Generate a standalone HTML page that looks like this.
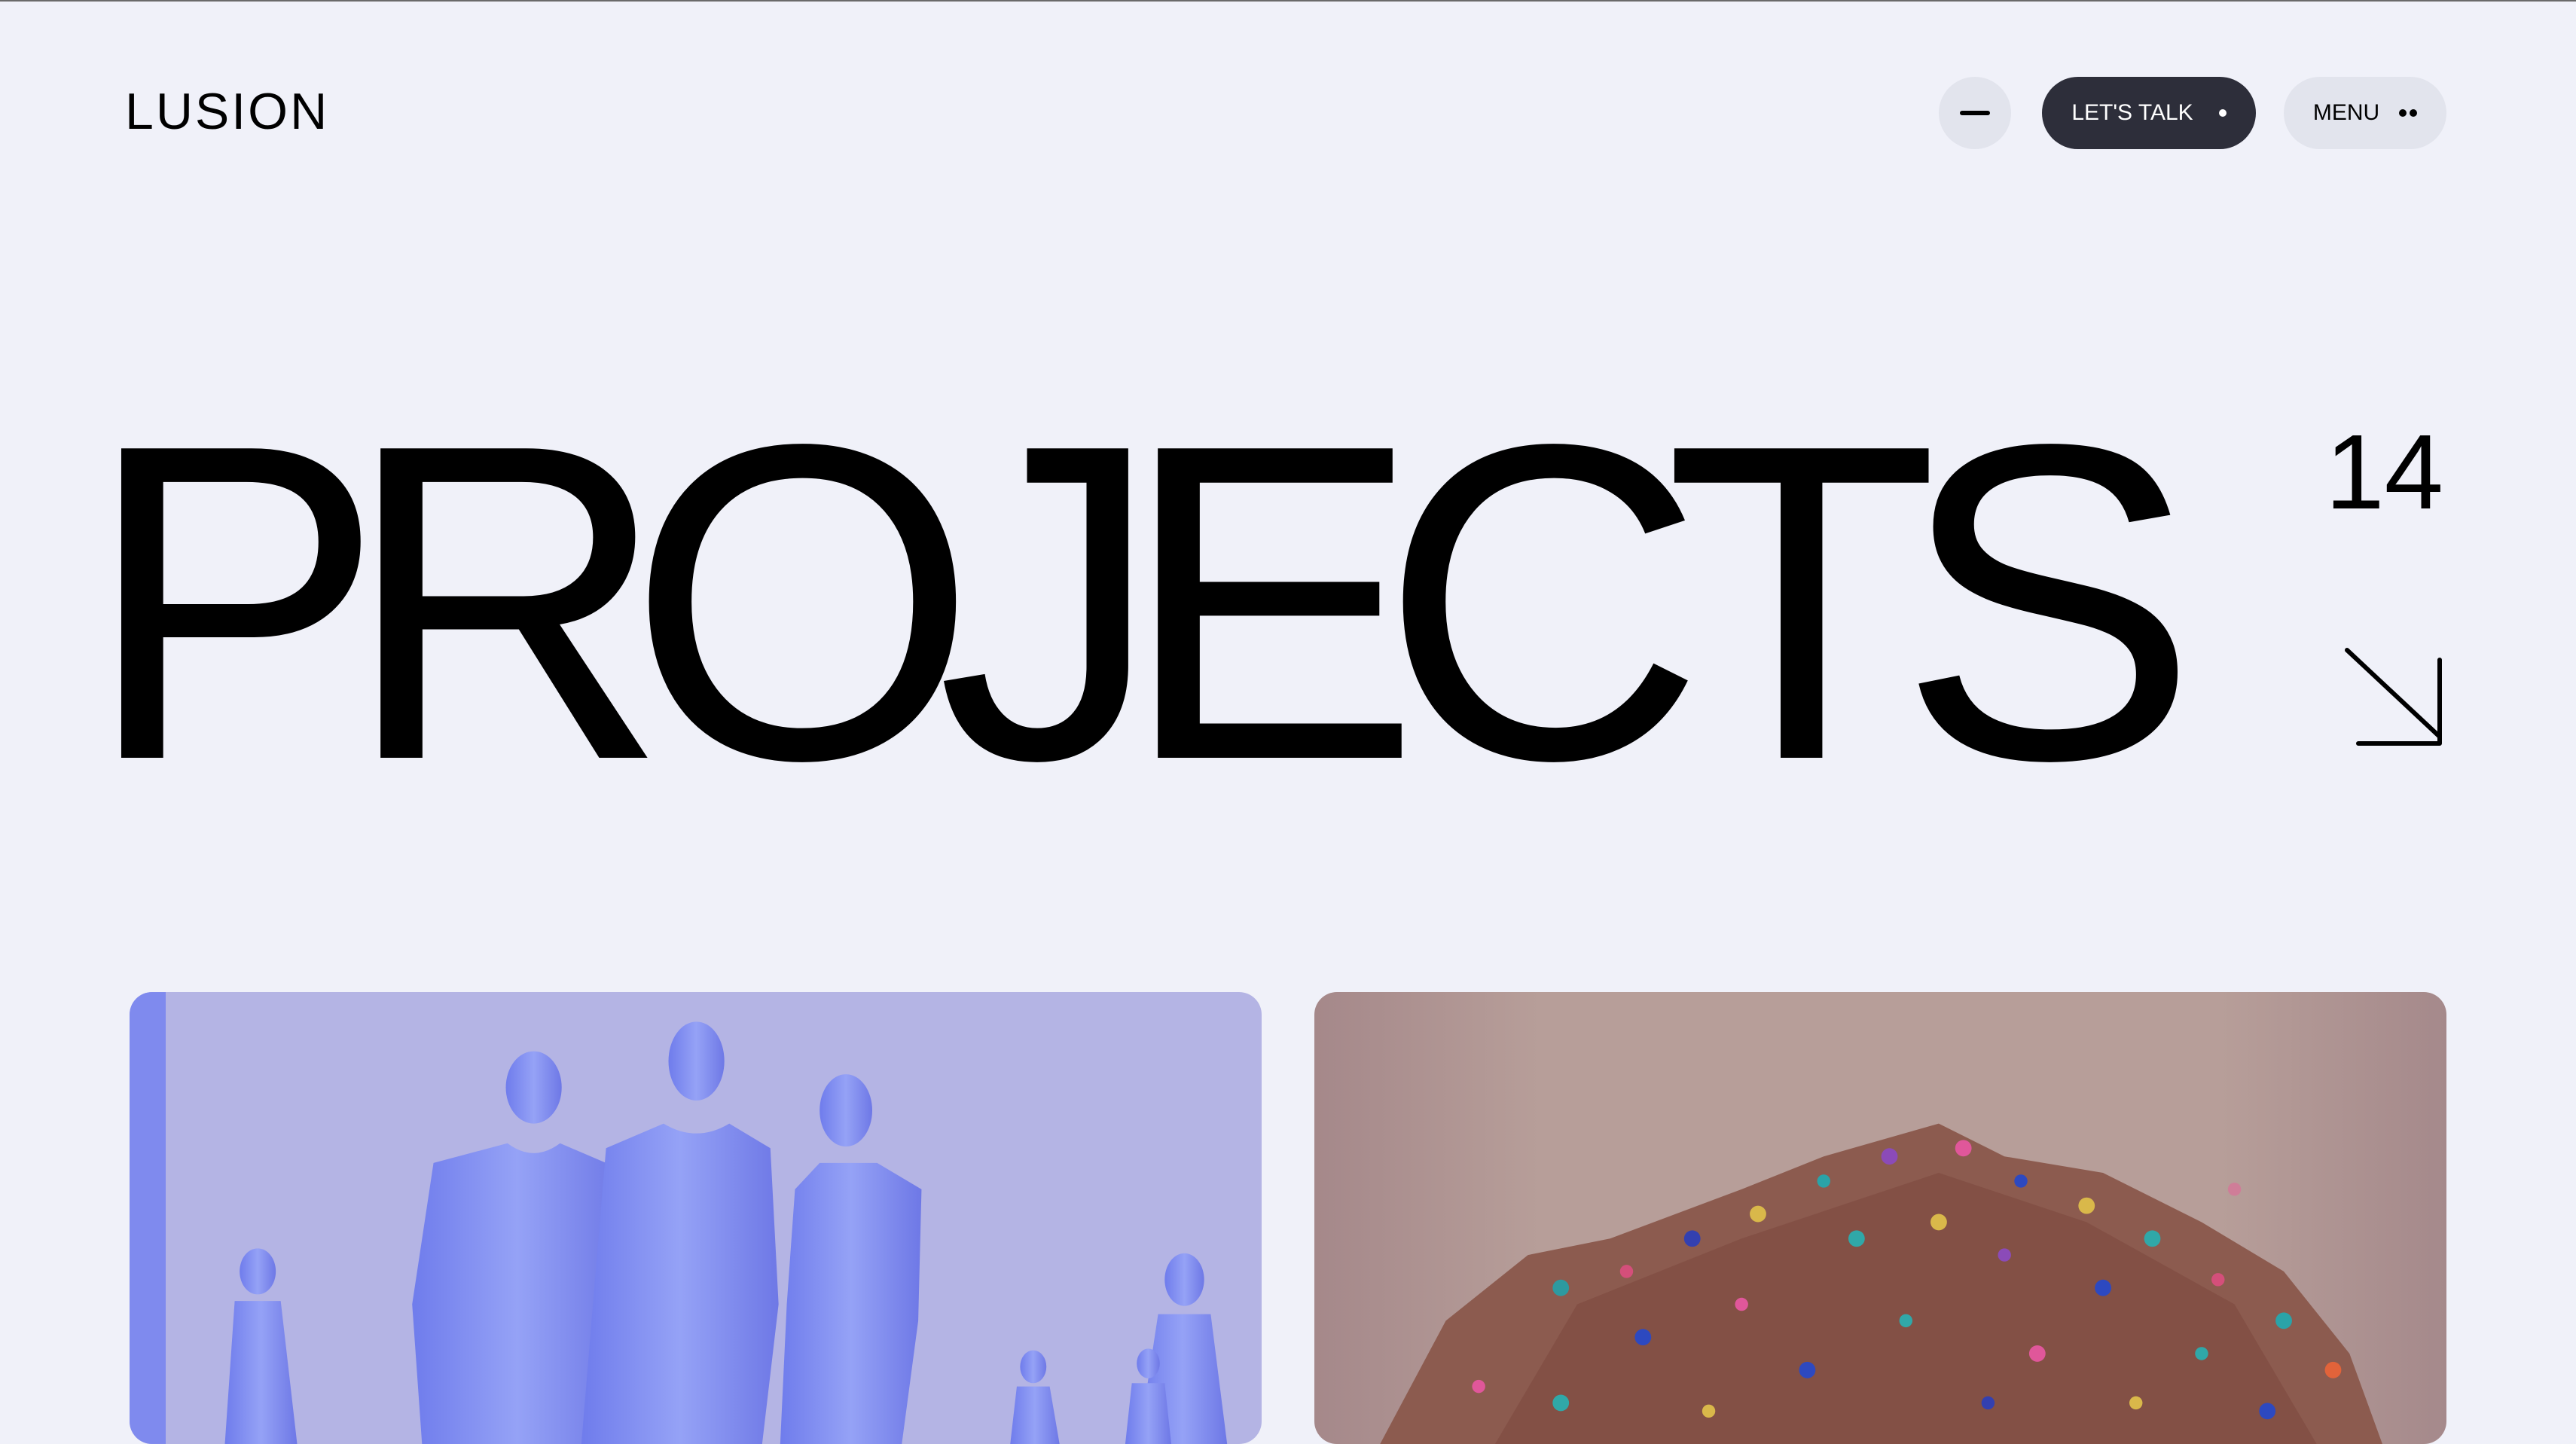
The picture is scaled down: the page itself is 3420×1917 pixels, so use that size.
<!DOCTYPE html>
<html><head><meta charset="utf-8"><style>
html,body{margin:0;padding:0;}
body{width:3420px;height:1896px;background:#f0f1f9;position:relative;overflow:hidden;font-family:"Liberation Sans",sans-serif;color:#000;}
.top{position:absolute;left:0;top:0;width:3420px;height:2px;background:#6a6a6a;}
.logo{position:absolute;left:166px;top:114px;font-size:68px;letter-spacing:3px;line-height:1;}
.btn{position:absolute;top:102px;height:96px;border-radius:48px;display:flex;align-items:center;justify-content:center;font-size:30px;}
.b1{left:2574px;width:96px;background:#e2e4ed;}
.b1 i{width:40px;height:6px;border-radius:3px;background:#000;display:block;}
.b2{left:2711px;width:284px;background:#2d2e3a;color:#fff;}
.b3{left:3032px;width:216px;background:#e2e4ed;}
.dot{display:inline-block;width:10px;height:10px;border-radius:50%;background:currentColor;margin-left:34px;}
.dot2{display:inline-block;width:10px;height:10px;border-radius:50%;background:#000;margin-left:4px;}
.h1{position:absolute;left:112px;top:501px;font-size:597px;line-height:1;letter-spacing:-54px;white-space:nowrap;}
.num{position:absolute;right:176px;top:556px;font-size:141px;line-height:1;}
.card{position:absolute;top:1317px;height:600px;border-radius:30px;overflow:hidden;}
.c1{left:172px;width:1503px;background:#b4b4e4;}
.c2{left:1745px;width:1503px;background:linear-gradient(90deg,#a5888a,#b79e99 20%,#b79e99 80%,#a5898b);}
</style></head><body>
<div class="top"></div>
<div class="logo">LUSION</div>
<div class="btn b1"><i></i></div>
<div class="btn b2">LET'S TALK<span class="dot"></span></div>
<div class="btn b3">MENU<span class="dot" style="margin-left:26px"></span><span class="dot2"></span></div>
<div class="h1">PROJECTS</div>
<div class="num">14</div>
<svg style="position:absolute;left:3100px;top:850px" width="160" height="150"><path d="M16 13 L139 128 M139 26 V137 H31" fill="none" stroke="#000" stroke-width="6" stroke-linecap="round" stroke-linejoin="round"/></svg>
<div class="card c1"><svg width="1503" height="600" viewBox="0 0 689 275">
<defs><linearGradient id="g" x1="0" y1="0" x2="1" y2="0"><stop offset="0" stop-color="#6f7cec"/><stop offset=".5" stop-color="#95a2f6"/><stop offset="1" stop-color="#6e78e6"/></linearGradient></defs>
<rect x="0" y="0" width="22" height="275" fill="#7f8aee"/>
<g fill="url(#g)">
<ellipse cx="246" cy="58" rx="17" ry="22"/><path d="M230 92 Q246 104 262 92 L290 104 L300 190 L288 275 L178 275 L172 190 L185 104Z"/>
<ellipse cx="345" cy="42" rx="17" ry="24"/><path d="M325 80 Q345 92 365 80 L390 95 L395 190 L385 275 L275 275 L282 190 L290 95Z"/>
<ellipse cx="436" cy="72" rx="16" ry="22"/><path d="M420 104 L455 104 L482 120 L480 200 L470 275 L396 275 L400 190 L405 120Z"/>
<ellipse cx="78" cy="170" rx="11" ry="14"/><path d="M64 188 L92 188 L102 275 L58 275Z"/>
<ellipse cx="642" cy="175" rx="12" ry="16"/><path d="M626 196 L658 196 L668 275 L614 275Z"/>
<ellipse cx="550" cy="228" rx="8" ry="10"/><path d="M540 240 L560 240 L566 275 L536 275Z"/>
<ellipse cx="620" cy="226" rx="7" ry="9"/><path d="M610 238 L630 238 L634 275 L606 275Z"/>
</g></svg></div>
<div class="card c2"><svg width="1503" height="600" viewBox="0 0 689 275">
<path d="M40 275 L80 200 L130 160 L180 150 L260 120 L310 100 L380 80 L420 100 L480 110 L540 140 L590 170 L630 220 L650 275Z" fill="#8c5b4f"/>
<path d="M110 275 L160 190 L260 150 L380 110 L470 140 L560 190 L610 275Z" fill="#7d4a40" opacity=".6"/>
<g>
<circle cx="150" cy="180" r="5" fill="#2d9aa0"/><circle cx="190" cy="170" r="4" fill="#d44f7a"/><circle cx="230" cy="150" r="5" fill="#3340b0"/>
<circle cx="270" cy="135" r="5" fill="#d9b84a"/><circle cx="310" cy="115" r="4" fill="#2aa3a8"/><circle cx="350" cy="100" r="5" fill="#8b4bb8"/>
<circle cx="395" cy="95" r="5" fill="#e0579a"/><circle cx="430" cy="115" r="4" fill="#2d49c0"/><circle cx="470" cy="130" r="5" fill="#d9b84a"/>
<circle cx="510" cy="150" r="5" fill="#30a8a8"/><circle cx="550" cy="175" r="4" fill="#d44f7a"/><circle cx="590" cy="200" r="5" fill="#2aa3a8"/>
<circle cx="620" cy="230" r="5" fill="#e2633a"/><circle cx="200" cy="210" r="5" fill="#2d49c0"/><circle cx="260" cy="190" r="4" fill="#e0579a"/>
<circle cx="330" cy="150" r="5" fill="#30a8a8"/><circle cx="380" cy="140" r="5" fill="#d9b84a"/><circle cx="420" cy="160" r="4" fill="#8b4bb8"/>
<circle cx="480" cy="180" r="5" fill="#2d49c0"/><circle cx="540" cy="220" r="4" fill="#30a8a8"/><circle cx="100" cy="240" r="4" fill="#e0579a"/>
<circle cx="150" cy="250" r="5" fill="#30a8a8"/><circle cx="300" cy="230" r="5" fill="#2d49c0"/><circle cx="440" cy="220" r="5" fill="#e0579a"/>
<circle cx="500" cy="250" r="4" fill="#d9b84a"/><circle cx="580" cy="255" r="5" fill="#2d49c0"/><circle cx="360" cy="200" r="4" fill="#30a8a8"/>
<circle cx="240" cy="255" r="4" fill="#d9b84a"/><circle cx="410" cy="250" r="4" fill="#3340b0"/><circle cx="560" cy="120" r="4" fill="#cf7d98"/>
</g></svg></div>
</body></html>
